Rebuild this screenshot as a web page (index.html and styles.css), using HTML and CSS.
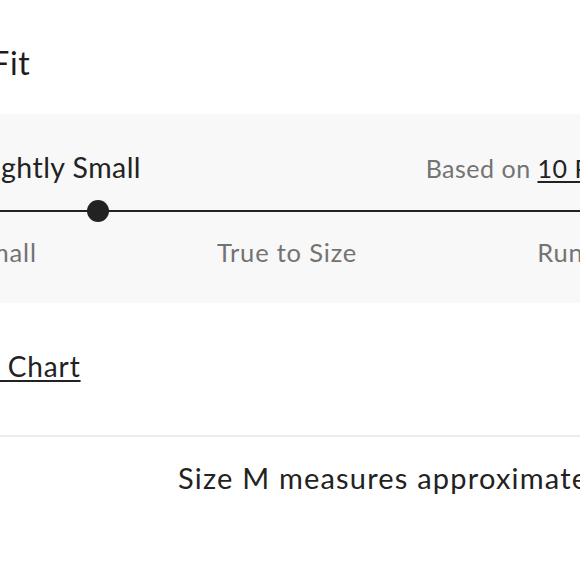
FILE: index.html
```html
<!DOCTYPE html>
<html lang="en">
<head>
<meta charset="utf-8">
<title>Size &amp; Fit</title>
<link rel="stylesheet" href="styles.css">
</head>
<body>
<main class="page">
  <h2 class="title">Size &amp; Fit</h2>
  <section class="fit-panel">
    <div class="fit-head">
      <span class="fit-verdict">Runs Slightly Small</span>
      <span class="fit-based">Based on <a class="fit-link" href="#">10 Reviews</a></span>
    </div>
    <div class="track"><span class="thumb" style="left:25%"></span></div>
    <div class="labels">
      <span>Runs Small</span>
      <span>True to Size</span>
      <span>Runs Large</span>
    </div>
  </section>
  <a class="size-chart" href="#">Size Chart</a>
  <hr class="divider">
  <p class="measure">Size M measures approximately 38 inches across the chest.</p>
</main>
</body>
</html>
```
FILE: styles.css
```css
html, body {
  margin: 0;
  padding: 0;
  background: #ffffff;
  overflow: hidden;
}
body {
  font-family: Lato, "Open Sans", sans-serif;
  color: #222222;
}
.page {
  width: 808px;
  margin-left: -116px;
  display: flex;
  flex-direction: column;
  align-items: flex-start;
}
.title {
  margin: 43px 0 0 8px;
  font-size: 32px;
  line-height: 40px;
  font-weight: 400;
  letter-spacing: 0.6px;
  color: #1c1c1c;
}
.fit-panel {
  align-self: stretch;
  margin-top: 31px;
  background: #f8f8f8;
  padding: 36px 24px 36px 24px;
}
.fit-head {
  display: flex;
  justify-content: space-between;
  align-items: baseline;
}
.fit-verdict {
  margin-left: -8px;
  font-size: 28.5px;
  line-height: 34px;
  letter-spacing: 0.45px;
  color: #222222;
}
.fit-based {
  font-size: 25px;
  line-height: 34px;
  color: #737373;
  letter-spacing: 0.5px;
}
.fit-link {
  color: #222222;
  text-decoration: underline;
  text-underline-offset: 3px;
}
.track {
  position: relative;
  margin-top: 25px;
  height: 2px;
  background: #222222;
}
.thumb {
  position: absolute;
  top: 1px;
  width: 22px;
  height: 22px;
  border-radius: 50%;
  background: #222222;
  transform: translate(-50%, -50%);
}
.labels {
  display: flex;
  justify-content: space-between;
  margin-top: 25px;
  font-size: 25.5px;
  line-height: 30px;
  color: #737373;
  letter-spacing: 0.8px;
}
.size-chart {
  margin: 46px 0 0 63px;
  font-size: 28px;
  line-height: 34px;
  letter-spacing: 0.9px;
  color: #222222;
  text-decoration: underline;
  text-decoration-thickness: 2px;
  text-underline-offset: 3px;
}
.divider {
  align-self: stretch;
  margin: 52px 0 0 0;
  border: 0;
  height: 2px;
  background: #ececec;
}
.measure {
  margin: 23px 0 0 294px;
  font-size: 29px;
  line-height: 36px;
  letter-spacing: 1.2px;
  color: #222222;
  white-space: nowrap;
}
```
